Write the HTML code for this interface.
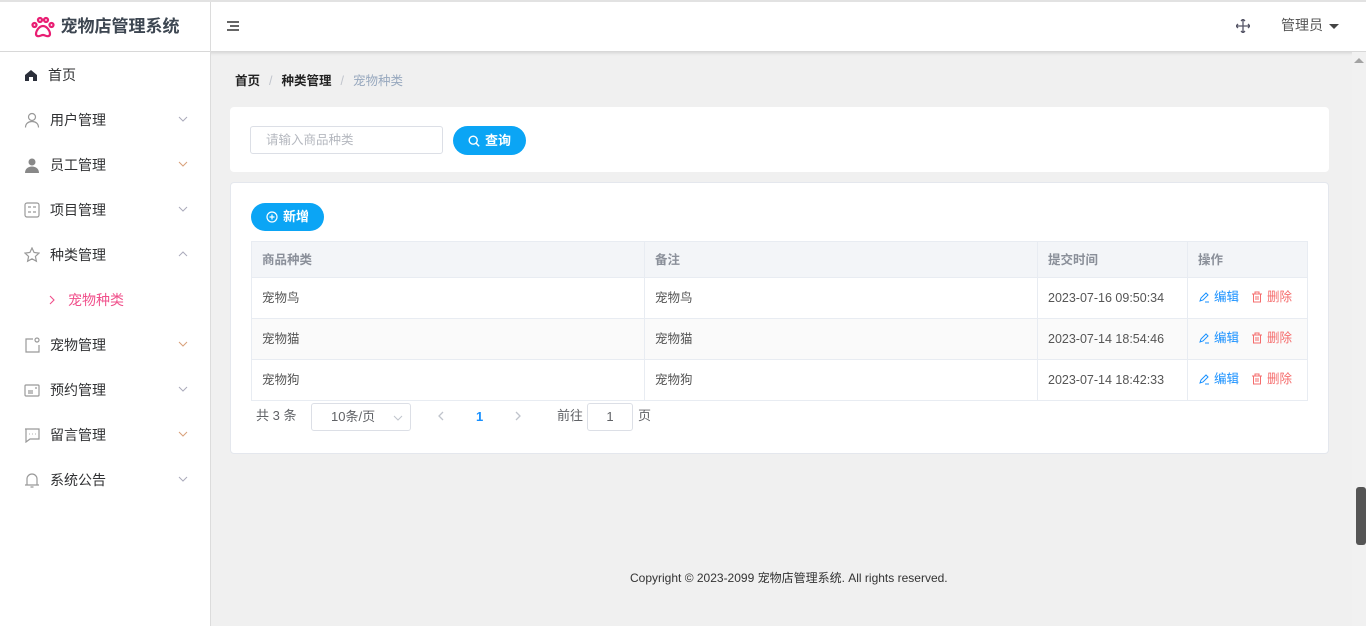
<!DOCTYPE html>
<html><head><meta charset="utf-8"><style>
*{box-sizing:border-box;margin:0;padding:0}
body{width:1366px;height:626px;overflow:hidden;background:#f0f0f0;font-family:"Liberation Sans","Noto Sans CJK SC",sans-serif;font-size:13px;color:#303133;position:relative;line-height:1.2}
.top{position:absolute;left:0;top:0;width:1366px;height:52px;background:#fff;border-top:2px solid #e2e2e2;border-bottom:1px solid #d8d8d8;box-shadow:0 1px 3px rgba(0,0,0,.12)}
.side{position:absolute;left:0;top:52px;width:211px;height:574px;background:#fff;border-right:1px solid #dcdcdc}
.logo{position:absolute;left:0;top:0;width:211px;height:50px;border-right:1px solid #dcdcdc;display:flex;align-items:center;justify-content:center;font-size:17px;font-weight:bold;color:#3d4651}
.mi{position:absolute;left:24px;font-size:14px;color:#303133;display:flex;align-items:center;line-height:16px}
.mi svg{margin-right:10px}
.arr{position:absolute;left:178px;width:10px;height:10px}
.card{position:absolute;background:#fff;border-radius:4px}
table{border-collapse:collapse;position:absolute;left:251px;top:241px;width:1057px;font-size:12.5px}
td,th{border:1px solid #e8ecf2;height:41px;padding:0 0 0 10px;text-align:left;color:#555;vertical-align:middle;line-height:16px}
th{height:36px;background:#f3f5f8;color:#8a8f99;font-weight:bold}
tr.s td{background:#fafafa}
.btn{position:absolute;background:#0ba5f5;color:#fff;border-radius:15px;height:29px;display:flex;align-items:center;justify-content:center;font-size:13px;font-weight:bold}
.op{color:#1890ff;display:inline-flex;align-items:center}.del{color:#f56c6c;margin-left:12px;display:inline-flex;align-items:center}
.op svg,.del svg{margin-right:4px}
</style></head><body>
<div class="top">
<div class="logo"><svg width="24" height="22" viewBox="0 0 24 22" style="margin-right:6px"><g fill="none" stroke="#e91e73" stroke-width="2.2"><circle cx="3.5" cy="9" r="2"/><circle cx="9" cy="4" r="2"/><circle cx="15" cy="4" r="2"/><circle cx="20.5" cy="9" r="2"/><path d="M12 10c-4 0-7 5-7 8 0 2 2 2.5 3.5 2 1.5-.5 2.5-1 3.5-1s2 .5 3.5 1c1.5.5 3.5 0 3.5-2 0-3-3-8-7-8z"/></g></svg>宠物店管理系统</div>
<svg style="position:absolute;left:227px;top:18px" width="12" height="12" viewBox="0 0 12 12"><path d="M0 2h12M3 6h9M0 10h12" stroke="#333" stroke-width="1.5"/></svg>
<svg style="position:absolute;left:1236px;top:17px" width="14" height="14" viewBox="0 0 14 14" fill="none" stroke="#556" stroke-width="1.3"><path d="M7 0v14M0 7h14M5 2l2-2 2 2M5 12l2 2 2-2M2 5L0 7l2 2M12 5l2 2-2 2"/></svg>
<div style="position:absolute;left:1281px;top:15px;font-size:14px;color:#555">管理员</div>
<div style="position:absolute;left:1329px;top:22px;border:5px solid transparent;border-top:5px solid #444;border-bottom:0"></div>
</div>
<div class="side">
<div class="mi" style="top:15px"><svg width="14" height="14" viewBox="0 0 14 14"><path d="M1 7L7 2l6 5v6H9V9H5v4H1z" fill="#2b2f3a"/></svg>首页</div>
<div class="mi" style="top:60px"><svg width="16" height="16" viewBox="0 0 16 16" fill="none" stroke="#999" stroke-width="1.2"><circle cx="8" cy="5" r="3.5"/><path d="M1.5 15.5c0-4 3-6 6.5-6s6.5 2 6.5 6"/></svg>用户管理</div>
<div class="mi" style="top:105px"><svg width="16" height="16" viewBox="0 0 16 16" fill="#888"><circle cx="8" cy="5" r="3.5"/><path d="M1 16c0-4 3-6.5 7-6.5s7 2.5 7 6.5z"/></svg>员工管理</div>
<div class="mi" style="top:150px"><svg width="16" height="16" viewBox="0 0 16 16" fill="none" stroke="#999" stroke-width="1.2"><rect x="1" y="1" width="14" height="14" rx="2"/><path d="M4 5h3M9 5h3M4 10h3M9 10h3"/></svg>项目管理</div>
<div class="mi" style="top:195px"><svg width="16" height="16" viewBox="0 0 16 16" fill="none" stroke="#999" stroke-width="1.2"><path d="M8 1l2.1 4.5 4.9.6-3.6 3.3 1 4.8L8 11.8 3.6 14.2l1-4.8L1 6.1l4.9-.6z"/></svg>种类管理</div>
<div class="mi" style="top:240px;left:48px;color:#f0508b"><svg width="8" height="10" viewBox="0 0 8 10" style="margin-right:12px"><path d="M2 1l4 4-4 4" fill="none" stroke="#f0508b" stroke-width="1.1"/></svg>宠物种类</div>
<div class="mi" style="top:285px"><svg width="16" height="16" viewBox="0 0 16 16" fill="none" stroke="#999" stroke-width="1.2"><path d="M9 2H2v13h13V8"/><circle cx="13" cy="3" r="2"/></svg>宠物管理</div>
<div class="mi" style="top:330px"><svg width="16" height="16" viewBox="0 0 16 16" fill="none" stroke="#999" stroke-width="1.2"><rect x="1" y="3" width="14" height="11" rx="1"/><path d="M4 9h5M4 11h5M11 6h2"/></svg>预约管理</div>
<div class="mi" style="top:375px"><svg width="16" height="16" viewBox="0 0 16 16" fill="none" stroke="#999" stroke-width="1.2"><path d="M1 2h14v10H6l-4 3V2z"/><path d="M5 7h.5M8 7h.5M11 7h.5" stroke-width="1.6"/></svg>留言管理</div>
<div class="mi" style="top:420px"><svg width="16" height="16" viewBox="0 0 16 16" fill="none" stroke="#999" stroke-width="1.2"><path d="M3 13V7a5 5 0 0110 0v6M1 13h14M6.5 15h3"/></svg>系统公告</div>
<svg class="arr" style="top:62px" viewBox="0 0 10 10"><path d="M1 3l4 4 4-4" fill="none" stroke="#aab" stroke-width="1"/></svg>
<svg class="arr" style="top:107px" viewBox="0 0 10 10"><path d="M1 3l4 4 4-4" fill="none" stroke="#d9a07a" stroke-width="1"/></svg>
<svg class="arr" style="top:152px" viewBox="0 0 10 10"><path d="M1 3l4 4 4-4" fill="none" stroke="#aab" stroke-width="1"/></svg>
<svg class="arr" style="top:197px" viewBox="0 0 10 10"><path d="M1 7l4-4 4 4" fill="none" stroke="#aab" stroke-width="1"/></svg>
<svg class="arr" style="top:287px" viewBox="0 0 10 10"><path d="M1 3l4 4 4-4" fill="none" stroke="#d9a07a" stroke-width="1"/></svg>
<svg class="arr" style="top:332px" viewBox="0 0 10 10"><path d="M1 3l4 4 4-4" fill="none" stroke="#aab" stroke-width="1"/></svg>
<svg class="arr" style="top:377px" viewBox="0 0 10 10"><path d="M1 3l4 4 4-4" fill="none" stroke="#d9a07a" stroke-width="1"/></svg>
<svg class="arr" style="top:422px" viewBox="0 0 10 10"><path d="M1 3l4 4 4-4" fill="none" stroke="#aab" stroke-width="1"/></svg>
</div>
<div style="position:absolute;left:1352px;top:52px;width:14px;height:574px;background:#f1f1f1"></div>
<div style="position:absolute;left:1354px;top:58px;border:5px solid transparent;border-bottom:5px solid #a3a3a3;border-top:0"></div>
<div style="position:absolute;left:1356px;top:487px;width:10px;height:58px;background:#555;border-radius:3px"></div>
<div style="position:absolute;left:235px;top:74px;font-size:12.5px"><b style="color:#222">首页</b><span style="color:#c0c4cc;margin:0 9px">/</span><b style="color:#222">种类管理</b><span style="color:#c0c4cc;margin:0 9px">/</span><span style="color:#97a8be">宠物种类</span></div>
<div class="card" style="left:230px;top:107px;width:1099px;height:65px"></div>
<div style="position:absolute;left:250px;top:126px;width:193px;height:28px;background:#fff;border:1px solid #dcdfe6;border-radius:3px;color:#b5b8bf;font-size:12.5px;padding:0 15px;line-height:26px">请输入商品种类</div>
<div class="btn" style="left:453px;top:126px;width:73px"><svg width="12" height="12" viewBox="0 0 12 12" style="margin-right:5px" fill="none" stroke="#fff" stroke-width="1.4"><circle cx="5.2" cy="5.2" r="4"/><path d="M8.2 8.2l3 3"/></svg>查询</div>
<div class="card" style="left:230px;top:182px;width:1099px;height:272px;border:1px solid #e4e7ed"></div>
<div class="btn" style="left:251px;top:203px;width:73px;height:28px"><svg width="12" height="12" viewBox="0 0 12 12" style="margin-right:5px" fill="none" stroke="#fff" stroke-width="1.2"><circle cx="6" cy="6" r="5"/><path d="M6 3.5v5M3.5 6h5"/></svg>新增</div>
<table>
<tr><th style="width:393px">商品种类</th><th style="width:393px">备注</th><th style="width:150px">提交时间</th><th>操作</th></tr>
<tr><td>宠物鸟</td><td>宠物鸟</td><td>2023-07-16 09:50:34</td><td><span class="op"><svg width="12" height="12" viewBox="0 0 12 12" fill="none" stroke="#1890ff" stroke-width="1"><path d="M2 10l1-3 5-5 2 2-5 5zM7 11h4"/></svg>编辑</span><span class="del"><svg width="12" height="12" viewBox="0 0 12 12" fill="none" stroke="#f56c6c" stroke-width="1"><path d="M1 3h10M4 3V1h4v2M2.5 3v8h7V3M5 5v4M7 5v4"/></svg>删除</span></td></tr>
<tr class="s"><td>宠物猫</td><td>宠物猫</td><td>2023-07-14 18:54:46</td><td><span class="op"><svg width="12" height="12" viewBox="0 0 12 12" fill="none" stroke="#1890ff" stroke-width="1"><path d="M2 10l1-3 5-5 2 2-5 5zM7 11h4"/></svg>编辑</span><span class="del"><svg width="12" height="12" viewBox="0 0 12 12" fill="none" stroke="#f56c6c" stroke-width="1"><path d="M1 3h10M4 3V1h4v2M2.5 3v8h7V3M5 5v4M7 5v4"/></svg>删除</span></td></tr>
<tr><td>宠物狗</td><td>宠物狗</td><td>2023-07-14 18:42:33</td><td><span class="op"><svg width="12" height="12" viewBox="0 0 12 12" fill="none" stroke="#1890ff" stroke-width="1"><path d="M2 10l1-3 5-5 2 2-5 5zM7 11h4"/></svg>编辑</span><span class="del"><svg width="12" height="12" viewBox="0 0 12 12" fill="none" stroke="#f56c6c" stroke-width="1"><path d="M1 3h10M4 3V1h4v2M2.5 3v8h7V3M5 5v4M7 5v4"/></svg>删除</span></td></tr>
</table>
<div style="position:absolute;left:256px;top:408px;color:#606266">共 3 条</div>
<div style="position:absolute;left:311px;top:403px;width:100px;height:28px;border:1px solid #dcdfe6;border-radius:3px;color:#606266;padding:0 19px;line-height:26px">10条/页<svg style="position:absolute;right:7px;top:10px" width="10" height="8" viewBox="0 0 10 8"><path d="M1 2l4 4 4-4" fill="none" stroke="#c0c4cc"/></svg></div>
<svg style="position:absolute;left:437px;top:411px" width="8" height="10" viewBox="0 0 8 10"><path d="M6 1L2 5l4 4" fill="none" stroke="#c0c4cc" stroke-width="1.3"/></svg>
<div style="position:absolute;left:476px;top:409px;color:#1890ff;font-weight:bold">1</div>
<svg style="position:absolute;left:514px;top:411px" width="8" height="10" viewBox="0 0 8 10"><path d="M2 1l4 4-4 4" fill="none" stroke="#c0c4cc" stroke-width="1.3"/></svg>
<div style="position:absolute;left:557px;top:408px;color:#606266">前往</div>
<div style="position:absolute;left:587px;top:403px;width:46px;height:28px;border:1px solid #dcdfe6;border-radius:3px;text-align:center;line-height:26px;color:#606266">1</div>
<div style="position:absolute;left:638px;top:408px;color:#606266">页</div>
<div style="position:absolute;left:630px;top:571px;font-size:12px;color:#333">Copyright © 2023-2099 宠物店管理系统. All rights reserved.</div>
</body></html>
